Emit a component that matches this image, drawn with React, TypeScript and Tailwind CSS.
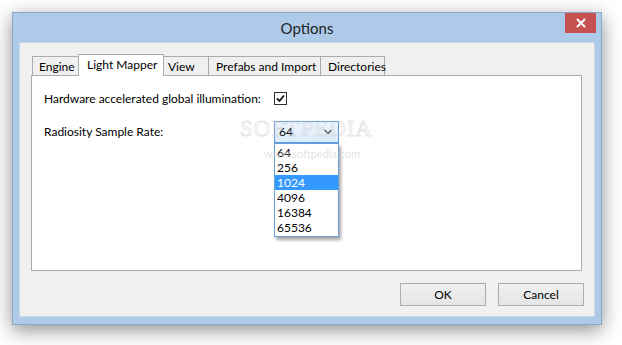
import React from "react";

const tabs = [
  { label: "Engine", w: "w-[48px]", pl: "pl-[6px]" },
  { label: "Light Mapper", w: "w-[86px]", pl: "pl-[8px]", active: true },
  { label: "View", w: "w-[48px]", pl: "pl-[6px]" },
  { label: "Prefabs and Import", w: "w-[113px]", pl: "pl-[7px]" },
  { label: "Directories", w: "w-[65px]", pl: "pl-[7px]" },
];

const items = ["64", "256", "1024", "4096", "16384", "65536"];

export default function App() {
  return (
    <div
      className="w-[622px] h-[345px] bg-white pt-[12px] pl-[12px] overflow-hidden relative text-[12px] text-black"
      style={{ fontFamily: 'Lato, "Segoe UI", sans-serif' }}
    >
      <div className="w-[590px] h-[313px] border border-[#8ca6c6] bg-[#adcae9] flex flex-col shadow-[0_5px_18px_rgba(0,0,0,0.45)]">
        {/* Title bar */}
        <div className="h-[29px] flex items-start justify-between">
          <div className="w-[31px] ml-[5px]" />
          <div className="text-[15px] text-[#222] mt-[5px] leading-[20px]">Options</div>
          <div className="w-[31px] h-[20px] mr-[5px] bg-[#c75050] flex items-center justify-center">
            <svg width="10" height="10" viewBox="0 0 10 10">
              <path d="M1 1 L9 9 M9 1 L1 9" stroke="white" strokeWidth="2" />
            </svg>
          </div>
        </div>
        {/* Client */}
        <div className="flex-1 ml-[6px] mr-[6px] mb-[7px] bg-[#f0f0f0] border border-[#c9d6e6] flex flex-col pl-[11px] pr-[12px] pt-[10px]">
          {/* Tabs */}
          <div className="flex items-end h-[22px] relative z-10 pl-[1px] whitespace-nowrap">
            {tabs.map((t) =>
              t.active ? (
                <div
                  key={t.label}
                  className={`${t.w} h-[22px] -mx-[2px] bg-white border border-[#acacac] border-b-0 ${t.pl} leading-[19px] relative z-10 -mb-[1px]`}
                >
                  {t.label}
                </div>
              ) : (
                <div
                  key={t.label}
                  className={`${t.w} h-[19px] bg-[#f0f0f0] border border-[#acacac] border-b-0 -ml-px first:ml-0 ${t.pl} leading-[19px]`}
                >
                  {t.label}
                </div>
              )
            )}
          </div>
          {/* Panel */}
          <div className="h-[196px] w-[551px] bg-white border border-[#acacac] relative pl-[12px] pt-[14px]">
            <div className="grid grid-cols-[230px_auto] items-center gap-y-[14px] relative whitespace-nowrap">
              <div className="leading-[17px]">Hardware accelerated global illumination:</div>
              <div className="w-[13px] h-[13px] border border-[#333] bg-white flex items-center justify-center">
                <svg width="9" height="9" viewBox="0 0 9 9">
                  <path d="M1 4.5 L3.5 7 L8 1.5" stroke="#111" strokeWidth="1.8" fill="none" />
                </svg>
              </div>
              <div className="leading-[17px] self-start mt-[2px]">Radiosity Sample Rate:</div>
              <div className="relative">
                <div className="w-[65px] h-[22px] border border-[#569de5] bg-gradient-to-b from-[#ecf4fc] to-[#dcecfc] flex items-center justify-between pl-[4px] pr-[6px]">
                  <span className="leading-[16px]">64</span>
                  <svg width="8" height="6" viewBox="0 0 8 6">
                    <path d="M0.5 1 L4 4.5 L7.5 1" stroke="#555" strokeWidth="1.3" fill="none" />
                  </svg>
                </div>
                {/* Dropdown list */}
                <div className="absolute left-0 top-[22px] w-[65px] bg-white border border-[#6b9fd8] py-[1px] shadow-[2px_3px_3px_rgba(0,0,0,0.35)] z-20">
                  {items.map((it) => (
                    <div
                      key={it}
                      className={`h-[15px] leading-[15px] pl-[2px] ${
                        it === "1024" ? "bg-[#3399ff] text-white" : ""
                      }`}
                    >
                      {it}
                    </div>
                  ))}
                </div>
              </div>
            </div>
            {/* Watermark (over content, faint) */}
            <div
              className="absolute left-[208px] top-[41px] text-[23px] tracking-[1px] text-transparent [-webkit-text-stroke:1px_rgba(200,200,200,0.45)] pointer-events-none leading-[24px] z-30"
              style={{ fontFamily: '"Liberation Serif", serif' }}
            >
              SOFTPEDIA
            </div>
            <div className="absolute left-[232px] top-[72px] text-[11px] leading-[12px] text-[#cfcfcf]/60 pointer-events-none z-30">
              www.softpedia.com
            </div>
          </div>
          {/* Buttons */}
          <div className="flex justify-end gap-[12px] mt-[12px] -mr-[2px]">
            <button className="w-[86px] h-[23px] border border-[#adadad] bg-gradient-to-b from-[#f0f0f0] to-[#e5e5e5] leading-[20px]">
              OK
            </button>
            <button className="w-[86px] h-[23px] border border-[#adadad] bg-gradient-to-b from-[#f0f0f0] to-[#e5e5e5] leading-[20px]">
              Cancel
            </button>
          </div>
        </div>
      </div>
    </div>
  );
}
